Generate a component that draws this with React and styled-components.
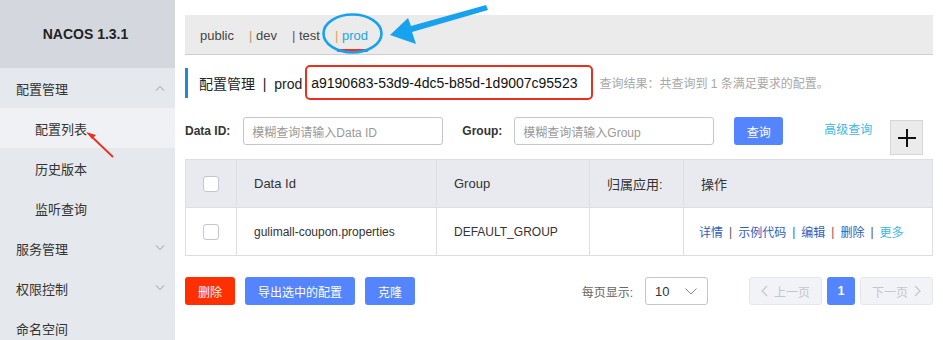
import React from "react";
import styled, { createGlobalStyle } from "styled-components";

const Global = createGlobalStyle`
  html, body { margin: 0; padding: 0; background: #fff; }
  body { font-family: "Liberation Sans", "Noto Sans CJK SC", Arial, sans-serif; color: #333; }
  * { box-sizing: border-box; }
`;

const Page = styled.div`
  position: relative;
  display: grid;
  grid-template-columns: 175px 1fr;
  height: 340px;
  overflow: hidden;
`;

const Sidebar = styled.aside`
  background: #e5e8ec;
  display: flex;
  flex-direction: column;
`;

const Brand = styled.div`
  height: 68px;
  background: #d4d8de;
  display: flex;
  align-items: center;
  justify-content: center;
  font-weight: bold;
  font-size: 14px;
  color: #222;
  padding-right: 4px;
`;

const MenuItem = styled.div`
  height: 40px;
  flex: none;
  display: flex;
  align-items: center;
  justify-content: space-between;
  padding: 0 10px 0 ${(p) => (p.$sub ? 35 : 16)}px;
  font-size: 13px;
  color: #333;
  background: ${(p) => (p.$active ? "#eff1f4" : "transparent")};
`;

const Chevron = ({ up }) => (
  <svg width="10" height="6" viewBox="0 0 10 6">
    <path
      d={up ? "M1 5.5 L5 1.5 L9 5.5" : "M1 0.5 L5 4.5 L9 0.5"}
      fill="none"
      stroke="#9a9ca3"
      strokeWidth="1"
    />
  </svg>
);

const Main = styled.main`
  padding: 15px 10px 0 10px;
  display: flex;
  flex-direction: column;
`;

const NsBar = styled.div`
  height: 40px;
  background: #ebebeb;
  border-bottom: 1px solid #cfcfcf;
  display: flex;
  align-items: center;
  padding-left: 15px;
  gap: 15px;
  font-size: 13px;
`;

const NsTab = styled.span`
  position: relative;
  color: ${(p) => (p.$active ? "#26a5e0" : "#444")};
  padding-top: 1px;
  ${(p) =>
    p.$active &&
    `&::after {
      content: "";
      position: absolute;
      left: 2px;
      right: 0;
      bottom: -9px;
      height: 3px;
      border-radius: 2px;
      background: #ee3322;
    }`}
`;

const Bar = styled.span`
  color: ${(p) => p.$c};
`;

const TitleRow = styled.div`
  display: flex;
  align-items: center;
  margin-top: 10px;
  height: 35px;
`;

const TitleText = styled.div`
  border-left: 3px solid #1f8ccf;
  height: 30px;
  display: flex;
  align-items: center;
  padding-left: 11px;
  font-size: 14px;
  color: #222;
  white-space: pre;
`;

const IdBox = styled.span`
  height: 35px;
  display: flex;
  align-items: center;
  border: 2px solid #ea2f1d;
  border-radius: 5px;
  padding: 0 14px 0 4px;
  margin-left: 3px;
  font-size: 14px;
  color: #111;
`;

const ResultNote = styled.span`
  margin-left: 6px;
  font-size: 12px;
  color: #a8a8a8;
`;

const SearchRow = styled.div`
  display: flex;
  align-items: flex-start;
  margin-top: 17px;
  height: 42px;
`;

const Label = styled.label`
  font-size: 12px;
  font-weight: bold;
  color: #333;
  height: 28px;
  line-height: 28px;
  margin-right: ${(p) => p.$mr}px;
`;

const Input = styled.div`
  width: 200px;
  height: 28px;
  border: 1px solid #c4c6cf;
  border-radius: 3px;
  padding-left: 8px;
  display: flex;
  align-items: center;
  font-size: 12px;
  color: #999;
  margin-right: ${(p) => p.$mr}px;
`;

const Btn = styled.button`
  height: 28px;
  padding: 0 12px;
  width: ${(p) => (p.$w ? `${p.$w}px` : "auto")};
  border: none;
  border-radius: 3px;
  background: ${(p) => p.$bg || "#5584ff"};
  color: #fff;
  font-size: 12px;
  font-family: inherit;
  display: inline-flex;
  align-items: center;
  justify-content: center;
`;

const AdvLink = styled.span`
  margin-left: 41px;
  font-size: 12px;
  color: #3cb7e6;
  height: 28px;
  line-height: 26px;
`;

const PlusBtn = styled.div`
  margin-left: 18px;
  margin-top: 3px;
  width: 33px;
  height: 35px;
  background: #ebebeb;
  border: 1px solid #d6d6d6;
  display: flex;
  align-items: center;
  justify-content: center;
`;

const Table = styled.div`
  display: grid;
  grid-template-columns: 50px 200px 153px 94px 1fr;
  border: 1px solid #dcdee3;
  border-bottom: none;
`;

const Cell = styled.div`
  height: 48px;
  display: flex;
  align-items: center;
  padding-left: 17px;
  color: #333;
  background: ${(p) => (p.$head ? "#e9eaef" : "#fff")};
  border-bottom: 1px solid #dcdee3;
  border-left: ${(p) => (p.$first ? "none" : "1px solid #dcdee3")};
  font-size: ${(p) => (p.$head ? 13 : 12)}px;
`;

const Checkbox = styled.span`
  width: 16px;
  height: 16px;
  border: 1px solid #c4c6cf;
  border-radius: 3px;
  background: #fff;
`;

const Actions = styled.div`
  display: flex;
  align-items: center;
  font-size: 12px;
  margin-left: -2px;
`;

const ActLink = styled.span`
  color: ${(p) => (p.$light ? "#3cb7e6" : "#2f5dbf")};
`;

const Sep = styled.span`
  color: ${(p) => p.$c || "#555"};
  margin: 0 6px;
`;

const Footer = styled.div`
  display: flex;
  align-items: center;
  margin-top: 21px;
  height: 28px;
`;

const LeftBtns = styled.div`
  display: flex;
  gap: 10px;
`;

const Pager = styled.div`
  margin-left: auto;
  display: flex;
  align-items: center;
`;

const PagerLabel = styled.span`
  font-size: 12px;
  color: #666;
  margin-right: 12px;
`;

const Select = styled.div`
  width: 63px;
  height: 28px;
  border: 1px solid #c4c6cf;
  border-radius: 3px;
  display: flex;
  align-items: center;
  justify-content: space-between;
  padding: 0 10px 0 9px;
  font-size: 13px;
  color: #333;
  margin-right: 41px;
`;

const PageBtn = styled.div`
  height: 28px;
  width: ${(p) => p.$w}px;
  margin-left: ${(p) => p.$ml || 0}px;
  border-radius: 3px;
  display: flex;
  align-items: center;
  justify-content: center;
  gap: 6px;
  font-size: 12px;
  ${(p) =>
    p.$current
      ? "background:#5584ff;color:#fff;font-weight:bold;"
      : "background:#f2f3f7;border:1px solid #e6e7eb;color:#c4c6cf;"}
`;

const Overlay = styled.svg`
  position: absolute;
  inset: 0;
  pointer-events: none;
`;

const Small = ({ d }) => (
  <svg width="7" height="12" viewBox="0 0 7 12">
    <path d={d} fill="none" stroke="#c4c6cf" strokeWidth="1.2" />
  </svg>
);

export default function App() {
  return (
    <>
      <Global />
      <Page>
        <Sidebar>
          <Brand>NACOS 1.3.1</Brand>
          <MenuItem>
            配置管理
            <Chevron up />
          </MenuItem>
          <MenuItem $sub $active>配置列表</MenuItem>
          <MenuItem $sub>历史版本</MenuItem>
          <MenuItem $sub>监听查询</MenuItem>
          <MenuItem>
            服务管理
            <Chevron />
          </MenuItem>
          <MenuItem>
            权限控制
            <Chevron />
          </MenuItem>
          <MenuItem>命名空间</MenuItem>
        </Sidebar>
        <Main>
          <NsBar>
            <NsTab>public</NsTab>
            <NsTab>
              <Bar $c="#b99a6a">|</Bar> dev
            </NsTab>
            <NsTab>
              <Bar $c="#6a4c9c">|</Bar> test
            </NsTab>
            <NsTab $active>
              <Bar $c="#e0a060">|</Bar> prod
            </NsTab>
          </NsBar>
          <TitleRow>
            <TitleText>配置管理  |  prod</TitleText>
            <IdBox>a9190683-53d9-4dc5-b85d-1d9007c95523</IdBox>
            <ResultNote>查询结果：共查询到 1 条满足要求的配置。</ResultNote>
          </TitleRow>
          <SearchRow>
            <Label $mr={13}>Data ID:</Label>
            <Input $mr={19}>模糊查询请输入Data ID</Input>
            <Label $mr={12}>Group:</Label>
            <Input $mr={20}>模糊查询请输入Group</Input>
            <Btn $w={49}>查询</Btn>
            <AdvLink>高级查询</AdvLink>
            <PlusBtn>
              <svg width="20" height="20" viewBox="0 0 20 20">
                <path d="M10 1 V19 M1 10 H19" stroke="#111" strokeWidth="2" />
              </svg>
            </PlusBtn>
          </SearchRow>
          <Table>
            <Cell $head $first>
              <Checkbox />
            </Cell>
            <Cell $head>Data Id</Cell>
            <Cell $head>Group</Cell>
            <Cell $head>归属应用:</Cell>
            <Cell $head>操作</Cell>
            <Cell $first>
              <Checkbox />
            </Cell>
            <Cell>gulimall-coupon.properties</Cell>
            <Cell>DEFAULT_GROUP</Cell>
            <Cell />
            <Cell>
              <Actions>
                <ActLink>详情</ActLink>
                <Sep>|</Sep>
                <ActLink>示例代码</ActLink>
                <Sep $c="#3a63c9">|</Sep>
                <ActLink>编辑</ActLink>
                <Sep $c="#b04050">|</Sep>
                <ActLink>删除</ActLink>
                <Sep>|</Sep>
                <ActLink $light>更多</ActLink>
              </Actions>
            </Cell>
          </Table>
          <Footer>
            <LeftBtns>
              <Btn $w={50} $bg="#ff3000">删除</Btn>
              <Btn $w={110}>导出选中的配置</Btn>
              <Btn $w={50}>克隆</Btn>
            </LeftBtns>
            <Pager>
              <PagerLabel>每页显示:</PagerLabel>
              <Select>
                10
                <svg width="12" height="7" viewBox="0 0 12 7">
                  <path d="M0.5 0.5 L6 6 L11.5 0.5" fill="none" stroke="#888" strokeWidth="1" />
                </svg>
              </Select>
              <PageBtn $w={73}>
                <Small d="M6 1 L1 6 L6 11" />
                上一页
              </PageBtn>
              <PageBtn $w={28} $ml={5} $current>
                1
              </PageBtn>
              <PageBtn $w={73} $ml={5}>
                下一页
                <Small d="M1 1 L6 6 L1 11" />
              </PageBtn>
            </Pager>
          </Footer>
        </Main>
        <Overlay width="943" height="340" viewBox="0 0 943 340">
          <ellipse cx="352.5" cy="33.5" rx="29" ry="19" fill="none" stroke="#16a2ef" strokeWidth="2.6" />
          <polygon
            points="486,5 488,10 412,32 416,44 390,35 408,18 411,26"
            fill="#16a2ef"
          />
          <line x1="113" y1="157" x2="91" y2="136" stroke="#ea2f1d" strokeWidth="1.8" />
          <polygon points="86,132 96,135 92,139" fill="#ea2f1d" />
        </Overlay>
      </Page>
    </>
  );
}
